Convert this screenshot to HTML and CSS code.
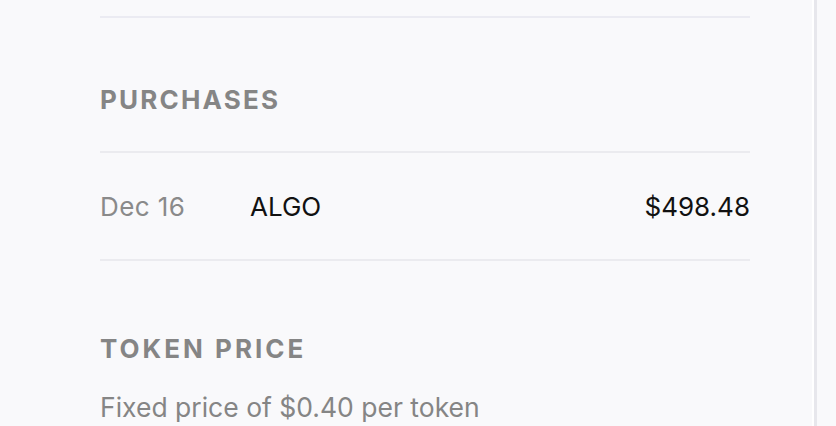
FILE: index.html
```html
<!DOCTYPE html>
<html lang="en">

<head>
    <meta charset="UTF-8">
    <meta name="viewport" content="width=device-width, initial-scale=1.0">
    <title>Purchases</title>
    <link rel="stylesheet" href="styles.css">
</head>

<body>
    <div class="page">
        <main class="content">
            <div class="divider top"></div>

            <section class="section">
                <h2 class="section-title">Purchases</h2>
                <div class="purchase-list">
                    <div class="purchase-row">
                        <span class="date">Dec 16</span>
                        <span class="token">ALGO</span>
                        <span class="amount">$498.48</span>
                    </div>
                </div>
            </section>

            <section class="section">
                <h2 class="section-title">Token price</h2>
                <p class="note">Fixed price of $0.40 per token</p>
            </section>
        </main>
        <div class="side"></div>
    </div>
</body>

</html>
```

FILE: styles.css
```css
body {
    font-family: 'Inter', 'Liberation Sans', sans-serif;
    margin: 0;
    padding: 0;
    background-color: #f9f9fb;
    color: #111;
    height: 100vh;
    overflow: hidden;
}
.page {
    display: flex;
    height: 100%;
}
.content {
    width: 650px;
    padding: 16px 62px 0 100px;
    border-right: 2px solid #fff;
}
.side {
    flex: 1;
    border-left: 3px solid #e7e7ec;
}
.divider {
    height: 2px;
    background-color: #ebebf2;
}
.section-title {
    margin: 0;
    font-size: 26px;
    font-weight: 700;
    letter-spacing: 2.2px;
    text-transform: uppercase;
    color: #858585;
}
.section:first-of-type .section-title {
    padding-top: 66px;
}
.purchase-list {
    margin-top: 36px;
    border-top: 2px solid #ebebef;
    border-bottom: 2px solid #ebebef;
}
.purchase-row {
    display: flex;
    align-items: center;
    height: 106px;
    font-size: 26px;
}
.date {
    width: 150px;
    color: #8a8a8a;
    letter-spacing: 0.4px;
}
.token {
    flex: 1;
    color: #111;
}
.amount {
    color: #111;
}
.section + .section .section-title {
    padding-top: 72px;
    letter-spacing: 3px;
}
.note {
    margin: 27px 0 0;
    font-size: 26.5px;
    color: #858585;
}
```
